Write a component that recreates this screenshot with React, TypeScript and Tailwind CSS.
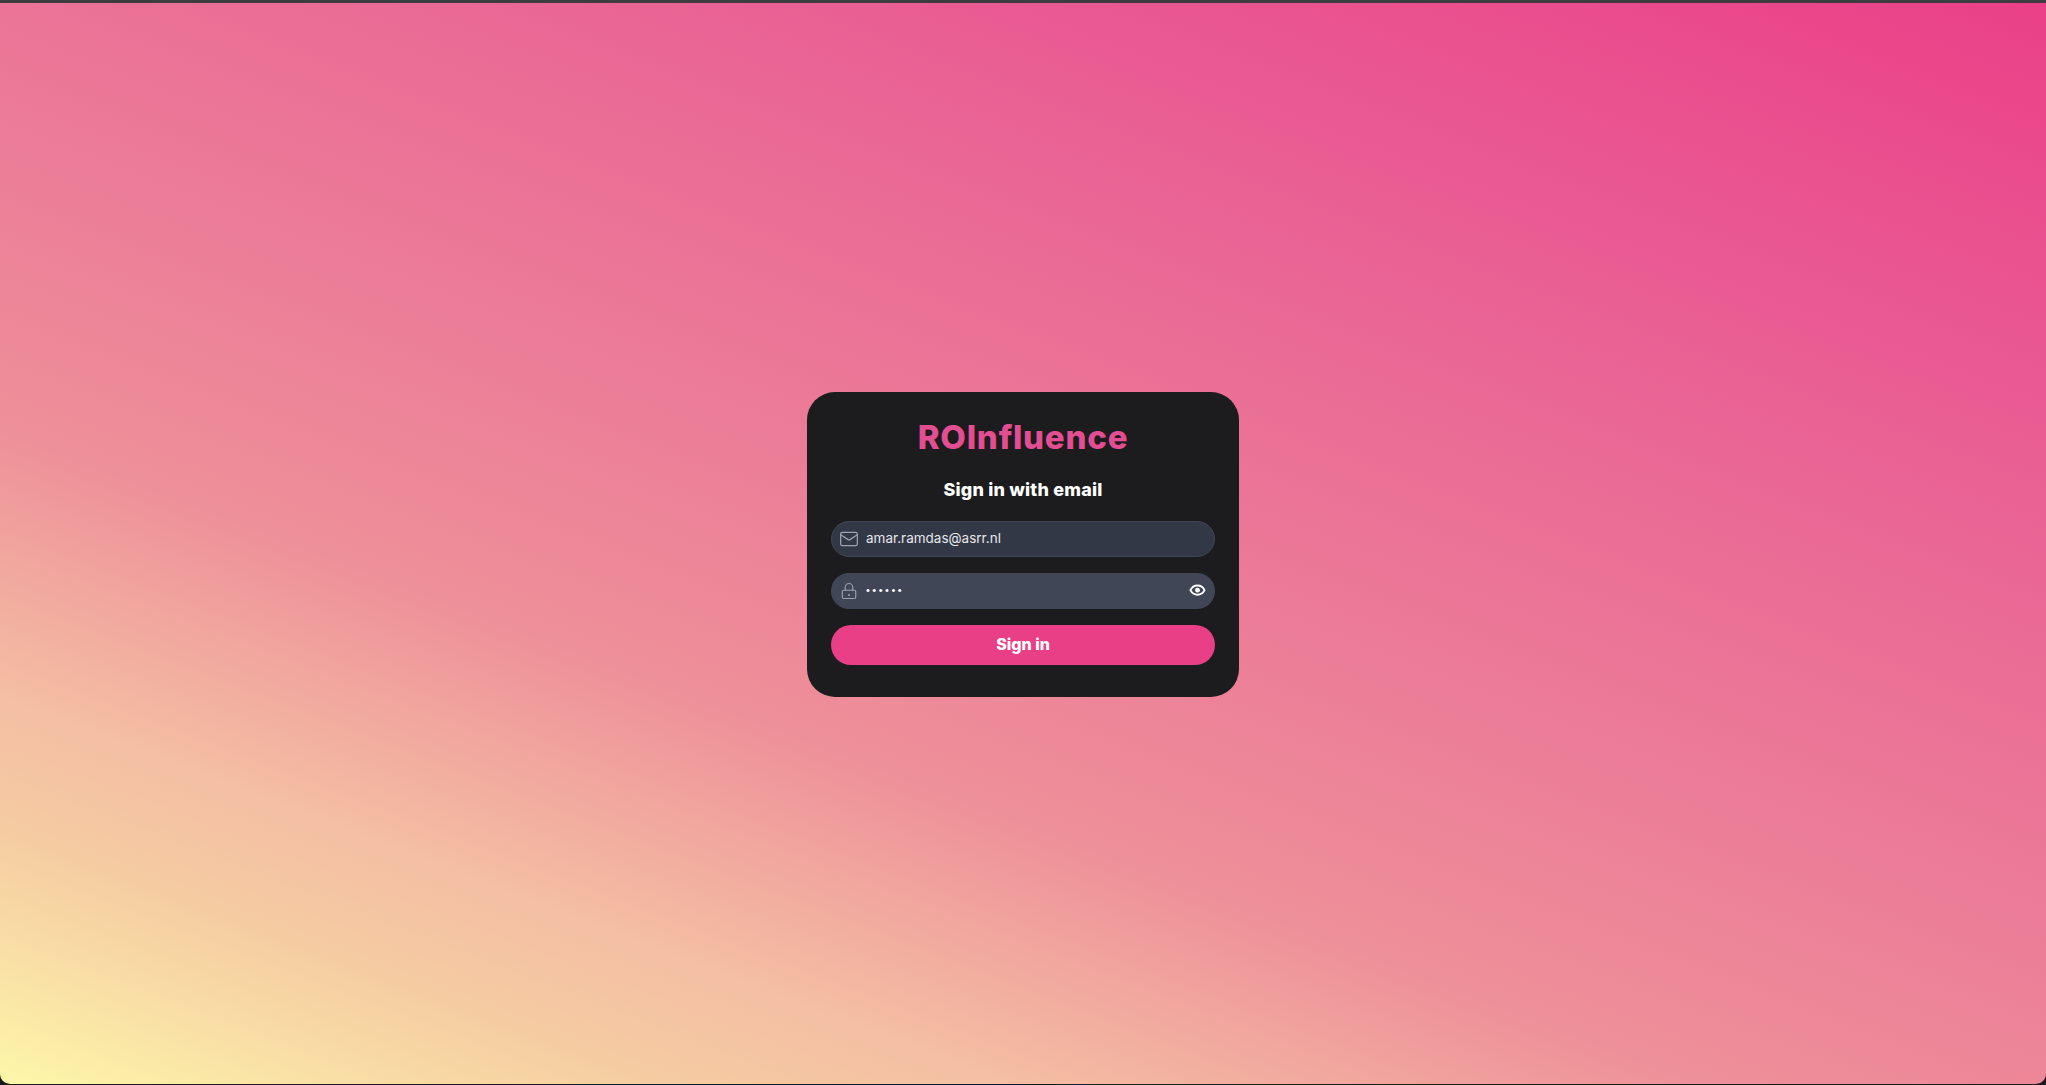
import { Lock, Mail } from 'lucide-react'

function EyeIcon() {
  return (
    <svg width="17" height="17" viewBox="0 0 24 24" fill="none" className="text-white shrink-0">
      <path
        d="M2 11.5C4 7.5 7.5 5 12 5s8 2.5 10 6.5C20 15.5 16.5 18 12 18S4 15.5 2 11.5z"
        stroke="currentColor"
        strokeWidth="2.6"
      />
      <circle cx="12" cy="11.5" r="3.4" fill="currentColor" />
    </svg>
  )
}

export default function App() {
  return (
    <div className="h-[1085px] w-full flex flex-col bg-[#1a1a1a] overflow-hidden">
      <div className="h-[3px] bg-[#3d3d3f] shrink-0" />
      <main className="flex-1 pt-px rounded-b-[10px] flex items-center justify-center bg-[linear-gradient(21deg,#fdf7a9_0%,#f9dfa5_7%,#f5cba2_14%,#f4bea3_21%,#ee9099_35%,#ec7d98_50%,#ea6c96_65%,#e95a92_79%,#ea4f8e_88%,#ea4088_100%)]">
        <div className="w-[432px] h-[305px] rounded-[28px] bg-[#1c1c1e] px-6 pt-[25px] flex flex-col">
          <h1 className="text-center text-[33px] leading-[40px] font-extrabold tracking-[0.8px] text-[#e34d92] font-['Inter',sans-serif]">
            ROInfluence
          </h1>
          <h2 className="mt-[21px] text-center text-lg leading-6 font-extrabold tracking-[0.2px] text-white font-['Inter',sans-serif]">
            Sign in with email
          </h2>
          <div className="mt-[19px] h-9 flex items-center rounded-full bg-[#333846] border border-[#414654] pl-[7px] pr-3">
            <Mail size={20} strokeWidth={1.5} className="text-[#9ca3af] shrink-0" />
            <input
              type="email"
              defaultValue="amar.ramdas@asrr.nl"
              className="ml-[7px] flex-1 bg-transparent outline-none text-[13.5px] text-[#e5e7eb] font-['Inter',sans-serif]"
            />
          </div>
          <div className="mt-4 h-9 flex items-center rounded-full bg-[#414656] pl-[9px] pr-[9px]">
            {/* keyhole dot, lucide's lock has none */}
            <span className="relative shrink-0 flex">
              <Lock size={18} strokeWidth={1.5} className="text-[#9ca3af]" />
              <span className="absolute left-[8px] top-[12px] size-[2px] rounded-full bg-[#9ca3af]" />
            </span>
            <input
              type="password"
              defaultValue="secret"
              className="ml-[8px] flex-1 bg-transparent outline-none text-[11px] tracking-[2.5px] text-white font-['Liberation_Sans',sans-serif]"
            />
            <EyeIcon />
          </div>
          <button className="mt-4 h-10 rounded-full bg-[#e83f87] text-white text-base font-extrabold pb-[2px] font-['Inter',sans-serif]">
            Sign in
          </button>
        </div>
      </main>
      <div className="h-px shrink-0" />
    </div>
  )
}
